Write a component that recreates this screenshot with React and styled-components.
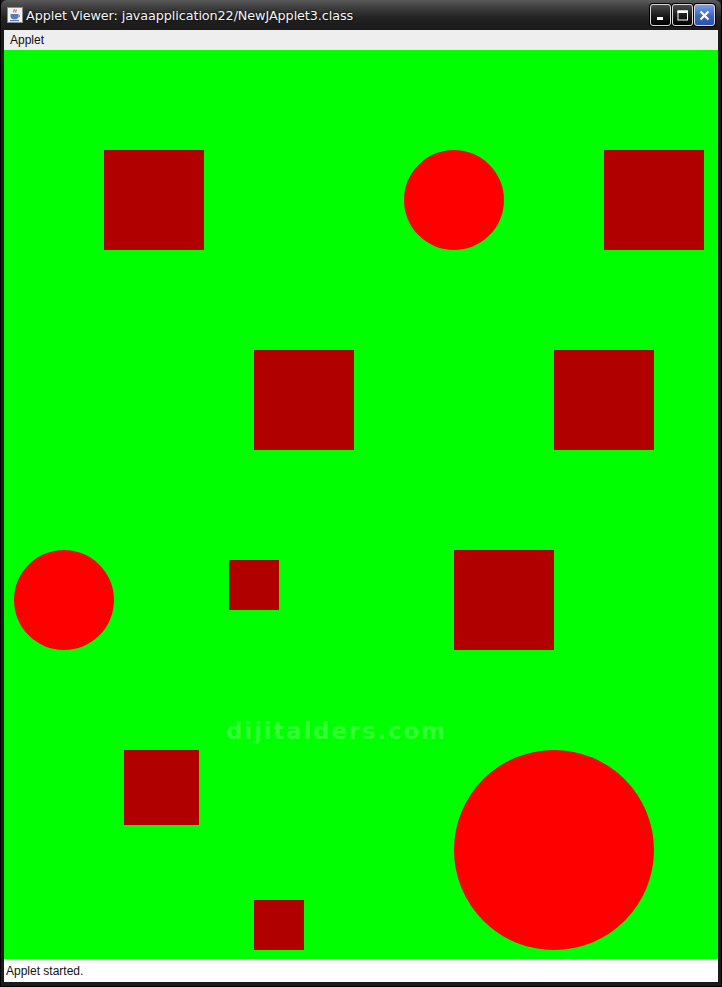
import React from "react";
import styled, { createGlobalStyle } from "styled-components";

const Global = createGlobalStyle`
  html, body { margin: 0; padding: 0; background: #111; }
  body { width: 722px; height: 987px; overflow: hidden; }
`;

const Window = styled.div`
  width: 722px;
  height: 987px;
  box-sizing: border-box;
  display: flex;
  flex-direction: column;
  background: #1a1a1a;
  border: 1px solid #000;
  border-top: none;
`;

const TitleBar = styled.div`
  height: 30px;
  flex: none;
  display: flex;
  align-items: center;
  padding: 0 6px 0 6px;
  background: linear-gradient(#5a5a5a 0%, #3a3a3a 30%, #222 60%, #1a1a1a 100%);
  border-top-left-radius: 6px;
  border-top-right-radius: 6px;
`;

const Title = styled.div`
  margin-left: 3px;
  flex: 1;
  color: #f4f4f4;
  font-family: "DejaVu Sans", "Liberation Sans", sans-serif;
  font-size: 12.8px;
  letter-spacing: -0.1px;
  text-shadow: 0 0 3px #000;
`;

const Buttons = styled.div`
  display: flex;
  gap: 1px;
  align-self: flex-start;
  margin-top: 4px;
`;

const WinBtn = styled.div`
  width: 21px;
  height: 22px;
  box-sizing: border-box;
  border: 1px solid #d8d8d8;
  border-radius: 3px;
  background: ${(p) =>
    p.$close
      ? "linear-gradient(#7aa0ee, #3a64c8 55%, #2c52b0)"
      : "linear-gradient(#4a4a4a, #1a1a1a 55%, #000)"};
  display: flex;
  align-items: center;
  justify-content: center;
  box-shadow: 0 0 0 1px #000;
`;

const Body = styled.div`
  flex: 1;
  display: flex;
  flex-direction: column;
  padding: 0 3px 4px 3px;
`;

const MenuBar = styled.div`
  height: 20px;
  flex: none;
  background: #eeeeee;
  display: flex;
  align-items: center;
  padding-left: 6px;
  font-family: "Liberation Sans", Arial, sans-serif;
  font-size: 12px;
  color: #111;
`;

const Canvas = styled.div`
  position: relative;
  flex: 1;
  background: #00ff00;
  overflow: hidden;
`;

const Shape = styled.div`
  position: absolute;
  background: ${(p) => (p.$round ? "#ff0000" : "#b00000")};
  border-radius: ${(p) => (p.$round ? "50%" : "0")};
`;

const Watermark = styled.div`
  position: absolute;
  left: 222px;
  top: 668px;
  font-family: "DejaVu Sans", "Liberation Sans", sans-serif;
  font-weight: bold;
  font-size: 23px;
  letter-spacing: 1.8px;
  color: rgba(150, 255, 150, 0.35);
`;

const StatusBar = styled.div`
  height: 23px;
  flex: none;
  background: #ffffff;
  display: flex;
  align-items: center;
  padding-left: 2px;
  font-family: "Liberation Sans", Arial, sans-serif;
  font-size: 12px;
  color: #111;
`;

const shapes = [
  { x: 100, y: 100, s: 100 },
  { x: 400, y: 100, s: 100, r: true },
  { x: 600, y: 100, s: 100 },
  { x: 250, y: 300, s: 100 },
  { x: 550, y: 300, s: 100 },
  { x: 10, y: 500, s: 100, r: true },
  { x: 225, y: 510, s: 50 },
  { x: 450, y: 500, s: 100 },
  { x: 120, y: 700, s: 75 },
  { x: 450, y: 700, s: 200, r: true },
  { x: 250, y: 850, s: 50 },
];

const JavaIcon = () => (
  <svg width="16" height="16" viewBox="0 0 16 16">
    <rect x="0.5" y="0.5" width="15" height="15" fill="#f2f2f2" stroke="#8a8a8a" />
    <path d="M7 2c1 1-1 2 0 3.5M9 2.5c.8 1-1 1.8 0 3" stroke="#e0562a" strokeWidth="1.1" fill="none" />
    <path d="M3.5 7h8v2.5c0 2-1.8 3-4 3s-4-1-4-3z" fill="#5a7bb5" />
    <path d="M11.5 8c1.5 0 1.5 2 0 2" stroke="#5a7bb5" fill="none" />
    <rect x="3" y="13" width="9" height="1.2" fill="#5a7bb5" />
  </svg>
);

export default function App() {
  return (
    <>
      <Global />
      <Window>
        <TitleBar>
          <JavaIcon />
          <Title>Applet Viewer: javaapplication22/NewJApplet3.class</Title>
          <Buttons>
            <WinBtn>
              <svg width="13" height="13" viewBox="0 0 13 13">
                <rect x="3" y="8" width="6" height="3" fill="#fff" />
              </svg>
            </WinBtn>
            <WinBtn>
              <svg width="13" height="13" viewBox="0 0 13 13">
                <rect x="2" y="2" width="9.5" height="9" fill="none" stroke="#fff" />
                <rect x="1.5" y="1.5" width="10.5" height="2.5" fill="#fff" />
              </svg>
            </WinBtn>
            <WinBtn $close>
              <svg width="13" height="13" viewBox="0 0 13 13">
                <path d="M2.5 2.5l8 8M10.5 2.5l-8 8" stroke="#fff" strokeWidth="2.2" />
              </svg>
            </WinBtn>
          </Buttons>
        </TitleBar>
        <Body>
          <MenuBar>Applet</MenuBar>
          <Canvas>
            {shapes.map((s, i) => (
              <Shape
                key={i}
                $round={s.r}
                style={{ left: s.x, top: s.y, width: s.s, height: s.s }}
              />
            ))}
            <Watermark>dijitalders.com</Watermark>
          </Canvas>
          <StatusBar>Applet started.</StatusBar>
        </Body>
      </Window>
    </>
  );
}
